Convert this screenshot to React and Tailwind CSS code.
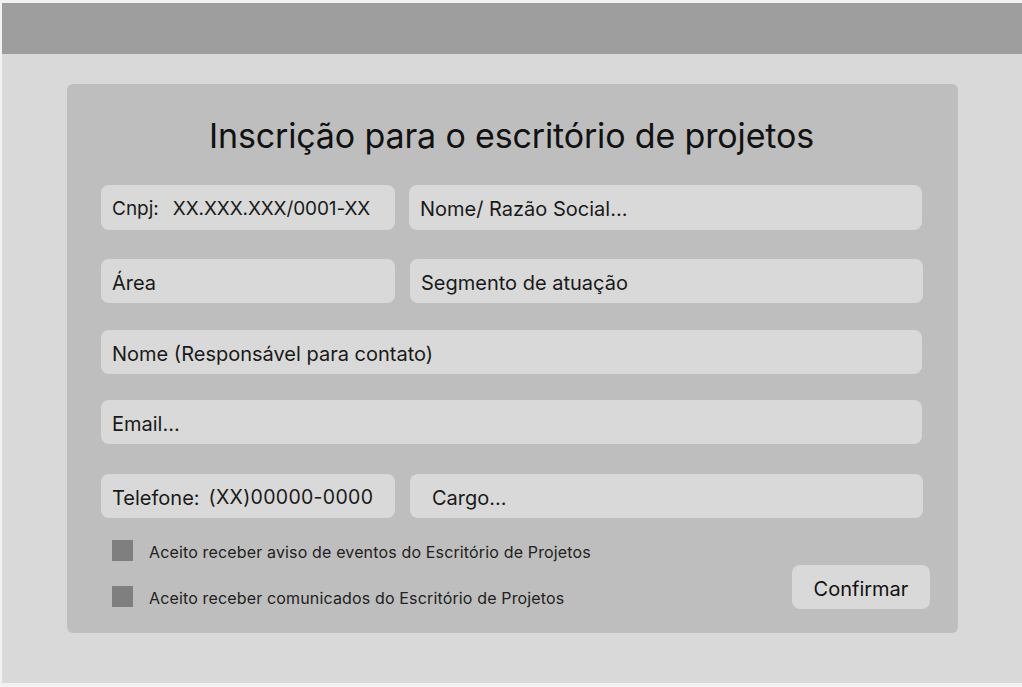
const Field = ({ children, className = '' }) => (
  <div className={`h-[44px] rounded-[8px] bg-[#d9d9d9] flex items-center px-[11px] pt-[3px] text-[20px] text-[#1a1a1a] ${className}`}>
    {children}
  </div>
);

const Check = ({ label }) => (
  <div className="flex items-center h-[21px]">
    <span className="w-[21px] h-[21px] bg-[#7f7f7f] shrink-0" />
    <span className="ml-[16px] pt-[3px] text-[16px] tracking-[0.15px] text-[#222]">{label}</span>
  </div>
);

const App = () => {
  return (
    <div
      className="w-[1022px] h-[687px] bg-[#f2f2f2] pl-[2px] pt-[3px] pb-[4px] overflow-hidden"
      style={{ fontFamily: 'Inter, "Noto Sans", sans-serif' }}
    >
      <div className="h-full bg-[#d9d9d9] flex flex-col">
        <div className="h-[51px] bg-[#9e9e9e] shrink-0" />

        <div className="mt-[30px] ml-[65px] w-[891px] h-[549px] rounded-[6px] bg-[#bebebe] pl-[34px] pr-[36px] pt-[31px]">
          <h1 className="text-center text-[34px] leading-[42px] tracking-[-0.15px] text-[#111]">
            Inscrição para o escritório de projetos
          </h1>

          <div className="mt-[28px] grid grid-cols-[294px_513px] gap-x-[14px]">
            <Field className="h-[45px]">
              <span className="text-[19px]">Cnpj:</span>
              <span className="ml-[14px] text-[19px] tracking-[-0.1px]">XX.XXX.XXX/0001-XX</span>
            </Field>
            <Field className="h-[45px]">Nome/ Razão Social...</Field>
          </div>

          <div className="mt-[29px] grid grid-cols-[294px_513px] gap-x-[15px]">
            <Field>Área</Field>
            <Field>Segmento de atuação</Field>
          </div>

          <Field className="mt-[27px]">Nome (Responsável para contato)</Field>
          <Field className="mt-[26px]">Email...</Field>

          <div className="mt-[30px] grid grid-cols-[294px_513px] gap-x-[15px]">
            <Field>
              <span className="text-[20px]">Telefone:</span>
              <span className="ml-[9px] text-[19.5px] tracking-[0.3px]">(XX)00000-0000</span>
            </Field>
            <Field className="pl-[22px]">Cargo...</Field>
          </div>

          <div className="mt-[22px] flex items-start justify-between -mr-[8px]">
            <div className="pl-[11px] flex flex-col gap-[25px]">
              <Check label="Aceito receber aviso de eventos do Escritório de Projetos" />
              <Check label="Aceito receber comunicados do Escritório de Projetos" />
            </div>
            <button className="mt-[25px] w-[138px] h-[44px] rounded-[8px] bg-[#d9d9d9] pt-[3px] text-[20px] text-[#111]">
              Confirmar
            </button>
          </div>
        </div>
      </div>
    </div>
  );
};

export default App;
